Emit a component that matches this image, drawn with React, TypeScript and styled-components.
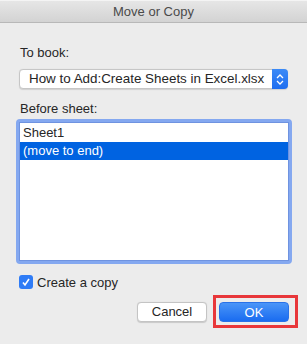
import React from 'react';
import styled, { createGlobalStyle } from 'styled-components';

const GlobalStyle = createGlobalStyle`
  html, body {
    margin: 0;
    padding: 0;
    background: #ececec;
  }
  body {
    font-family: 'Liberation Sans', Arial, sans-serif;
    font-size: 13px;
    color: #262626;
  }
`;

const Window = styled.div`
  width: 307px;
  height: 344px;
  overflow: hidden;
  background: #ececec;
  display: flex;
  flex-direction: column;
`;

const TitleBar = styled.div`
  height: 23px;
  box-sizing: border-box;
  border-top: 1px solid #f4f4f4;
  border-bottom: 1px solid #b8b8b8;
  background: linear-gradient(#e6e6e6, #d3d3d3);
  display: flex;
  align-items: center;
  justify-content: center;
  color: #4a4a4a;
  font-size: 13px;
  padding-bottom: 1px;
`;

const Body = styled.div`
  padding: 22px 18px 0 19px;
  display: flex;
  flex-direction: column;
`;

const Label = styled.div<{ $gap: number }>`
  height: 16px;
  line-height: 16px;
  padding-left: 1px;
  margin-bottom: ${(p) => p.$gap}px;
`;

const Select = styled.div`
  height: 20px;
  box-sizing: border-box;
  display: flex;
  align-items: stretch;
  background: #fff;
  border: 1px solid #c6c6c6;
  border-radius: 4px;
  box-shadow: 0 0.5px 1px rgba(0, 0, 0, 0.12);
  margin-bottom: 12px;
  padding-left: 1px;
  margin-right: 1px;
`;

const SelectText = styled.div`
  flex: 1;
  line-height: 18px;
  padding-left: 8px;
  white-space: nowrap;
  overflow: hidden;
  font-size: 13.4px;
`;

const Stepper = styled.div`
  width: 16px;
  margin: -1px -1px -1px 0;
  border-radius: 0 4px 4px 0;
  background: linear-gradient(#3b8af7, #1f6ef0);
  display: flex;
  align-items: center;
  justify-content: center;
`;

const ListRing = styled.div`
  margin: 2px -3px 0 -3px;
  border: 3px solid #84a8f0;
  border-radius: 4px;
  height: 145px;
  box-sizing: border-box;
`;

const List = styled.div`
  height: 100%;
  box-sizing: border-box;
  border: 1px solid #6f93e0;
  background: #fff;
  padding-top: 1px;
`;

const Row = styled.div<{ $selected?: boolean }>`
  height: 18px;
  line-height: 18px;
  padding-left: 3px;
  background: ${(p) => (p.$selected ? '#0063e1' : 'transparent')};
  color: ${(p) => (p.$selected ? '#fff' : '#262626')};
`;

const CheckRow = styled.label`
  display: flex;
  align-items: center;
  gap: 4px;
  margin-top: 10px;
  height: 16px;
`;

const Checkbox = styled.span`
  width: 14px;
  height: 14px;
  border-radius: 3px;
  background: #2f7cf6;
  display: flex;
  align-items: center;
  justify-content: center;
`;

const Buttons = styled.div`
  display: flex;
  justify-content: flex-end;
  align-items: center;
  gap: 6px;
  margin-top: 5px;
  margin-right: -9px;
`;

const Button = styled.div<{ $primary?: boolean }>`
  width: 70px;
  height: 20px;
  box-sizing: border-box;
  border-radius: 4px;
  display: flex;
  align-items: center;
  justify-content: center;
  font-size: 13px;
  ${(p) =>
    p.$primary
      ? `
    background: linear-gradient(#4a95f8, #1a6cf0);
    color: #fff;
    border: 1px solid #2a72e8;
  `
      : `
    background: #fff;
    color: #262626;
    border: 1px solid #c4c4c4;
    box-shadow: 0 0.5px 1px rgba(0, 0, 0, 0.15);
  `}
`;

const Highlight = styled.div`
  border: 3px solid #e8373a;
  padding: 4px 6px 3px 3px;
`;

function App() {
  return (
    <Window>
      <GlobalStyle />
      <TitleBar>Move or Copy</TitleBar>
      <Body>
        <Label $gap={8}>To book:</Label>
        <Select>
          <SelectText>How to Add:Create Sheets in Excel.xlsx</SelectText>
          <Stepper>
            <svg width="8" height="13" viewBox="0 0 8 13">
              <path d="M1 5 L4 2 L7 5" fill="none" stroke="#fff" strokeWidth="1.3" />
              <path d="M1 8 L4 11 L7 8" fill="none" stroke="#fff" strokeWidth="1.3" />
            </svg>
          </Stepper>
        </Select>
        <Label $gap={0}>Before sheet:</Label>
        <ListRing>
          <List>
            <Row>Sheet1</Row>
            <Row $selected>(move to end)</Row>
          </List>
        </ListRing>
        <CheckRow>
          <Checkbox>
            <svg width="10" height="10" viewBox="0 0 10 10">
              <path d="M2 5.5 L4 8 L8 2" fill="none" stroke="#fff" strokeWidth="1.6" />
            </svg>
          </Checkbox>
          Create a copy
        </CheckRow>
        <Buttons>
          <Button>Cancel</Button>
          <Highlight>
            <Button $primary>OK</Button>
          </Highlight>
        </Buttons>
      </Body>
    </Window>
  );
}

export default App;
